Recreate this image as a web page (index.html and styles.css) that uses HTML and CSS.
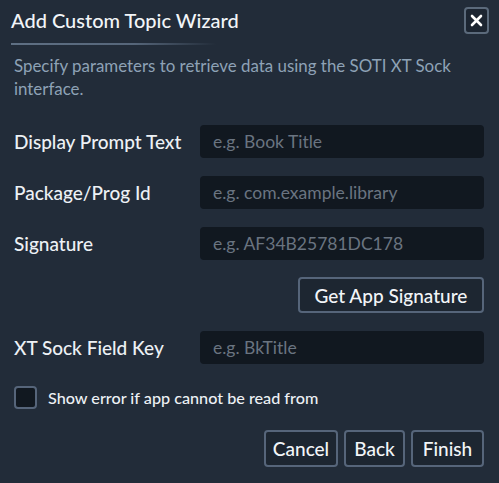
FILE: index.html
```html
<!DOCTYPE html>
<html>
<head>
<meta charset="utf-8">
<link rel="stylesheet" href="styles.css">
</head>
<body>
<div class="dialog">
  <div class="header">
    <h1 class="title">Add Custom Topic Wizard</h1>
    <button class="close" aria-label="Close">
      <svg width="13" height="13" viewBox="0 0 13 13"><path d="M2 2 L11 11 M11 2 L2 11" stroke="#ffffff" stroke-width="2.6" stroke-linecap="round"/></svg>
    </button>
  </div>
  <div class="divider"></div>
  <p class="desc">Specify parameters to retrieve data using the SOTI XT Sock interface.</p>
  <div class="form">
    <div class="row">
      <label class="label">Display Prompt Text</label>
      <input class="input" type="text" placeholder="e.g. Book Title">
    </div>
    <div class="row">
      <label class="label">Package/Prog Id</label>
      <input class="input" type="text" placeholder="e.g. com.example.library">
    </div>
    <div class="row">
      <label class="label">Signature</label>
      <input class="input" type="text" placeholder="e.g. AF34B25781DC178">
    </div>
    <div class="sig-row">
      <button class="btn btn-sig">Get App Signature</button>
    </div>
    <div class="row row-key">
      <label class="label">XT Sock Field Key</label>
      <input class="input" type="text" placeholder="e.g. BkTitle">
    </div>
    <label class="check-row">
      <span class="checkbox"></span>
      <span class="check-label">Show error if app cannot be read from</span>
    </label>
  </div>
  <div class="footer">
    <button class="btn btn-cancel">Cancel</button>
    <button class="btn btn-back">Back</button>
    <button class="btn btn-finish">Finish</button>
  </div>
</div>
</body>
</html>
```
FILE: styles.css
```css
* { box-sizing: border-box; }
html, body {
  margin: 0;
  padding: 0;
  background: #222c39;
}
body {
  font-family: Lato, "Open Sans", sans-serif;
  color: #e9eef3;
  width: 499px;
  height: 483px;
  overflow: hidden;
}
.dialog {
  padding: 0 15px 0 14px;
}
.header {
  display: flex;
  justify-content: space-between;
  align-items: center;
  padding-top: 6px;
  margin-left: -3px;
}
.title {
  margin: 0;
  font-size: 20px;
  font-weight: 500;
  line-height: 28px;
  color: #f2f5f8;
}
.close {
  width: 25px;
  height: 27px;
  margin-right: -5px;
  border: 2px solid #5b6a7b;
  border-radius: 4px;
  background: #1c2531;
  display: flex;
  align-items: center;
  justify-content: center;
  padding: 0;
}
.divider {
  margin: 9px 0 0 -3px;
  width: 205px;
  height: 2px;
  background: linear-gradient(to right, #5f7084 0%, #56667a 60%, rgba(86,102,122,0) 100%);
}
.desc {
  margin: 9px 0 0 0;
  font-size: 16.9px;
  line-height: 23px;
  color: #8ea2b6;
  padding-right: 15px;
}
.form {
  margin-top: 25px;
  display: flex;
  flex-direction: column;
}
.row {
  display: flex;
  align-items: center;
  height: 33px;
  margin-bottom: 18px;
}
.label {
  width: 186px;
  font-size: 19px;
  font-weight: 500;
  color: #edf1f5;
}
.input {
  flex: 1;
  height: 33px;
  background: #111820;
  border: none;
  border-radius: 4px;
  padding: 0 13px;
  font-family: inherit;
  font-size: 17.5px;
  color: #e9eef3;
  outline: none;
}
.input::placeholder {
  color: #6a7480;
}
.sig-row {
  display: flex;
  justify-content: flex-end;
  margin-top: -1px;
  margin-bottom: 18px;
}
.btn {
  font-family: inherit;
  font-size: 19px;
  font-weight: 500;
  color: #f2f5f8;
  background: #1d2631;
  border: 2px solid #56657a;
  border-radius: 4px;
  height: 37px;
  padding: 0;
}
.btn-sig {
  height: 36px;
  width: 186px;
}
.btn-cancel { width: 74px; }
.btn-back { width: 61px; }
.btn-finish { width: 73px; }
.row-key {
  margin-bottom: 22px;
}
.check-row {
  display: flex;
  align-items: center;
  gap: 11px;
}
.checkbox {
  width: 23px;
  height: 23px;
  border: 2px solid #56657a;
  border-radius: 4px;
  background: #111820;
}
.check-label {
  font-size: 16.2px;
  font-weight: 500;
  color: #edf1f5;
}
.footer {
  display: flex;
  justify-content: flex-end;
  gap: 6px;
  margin-top: 21px;
}
```
